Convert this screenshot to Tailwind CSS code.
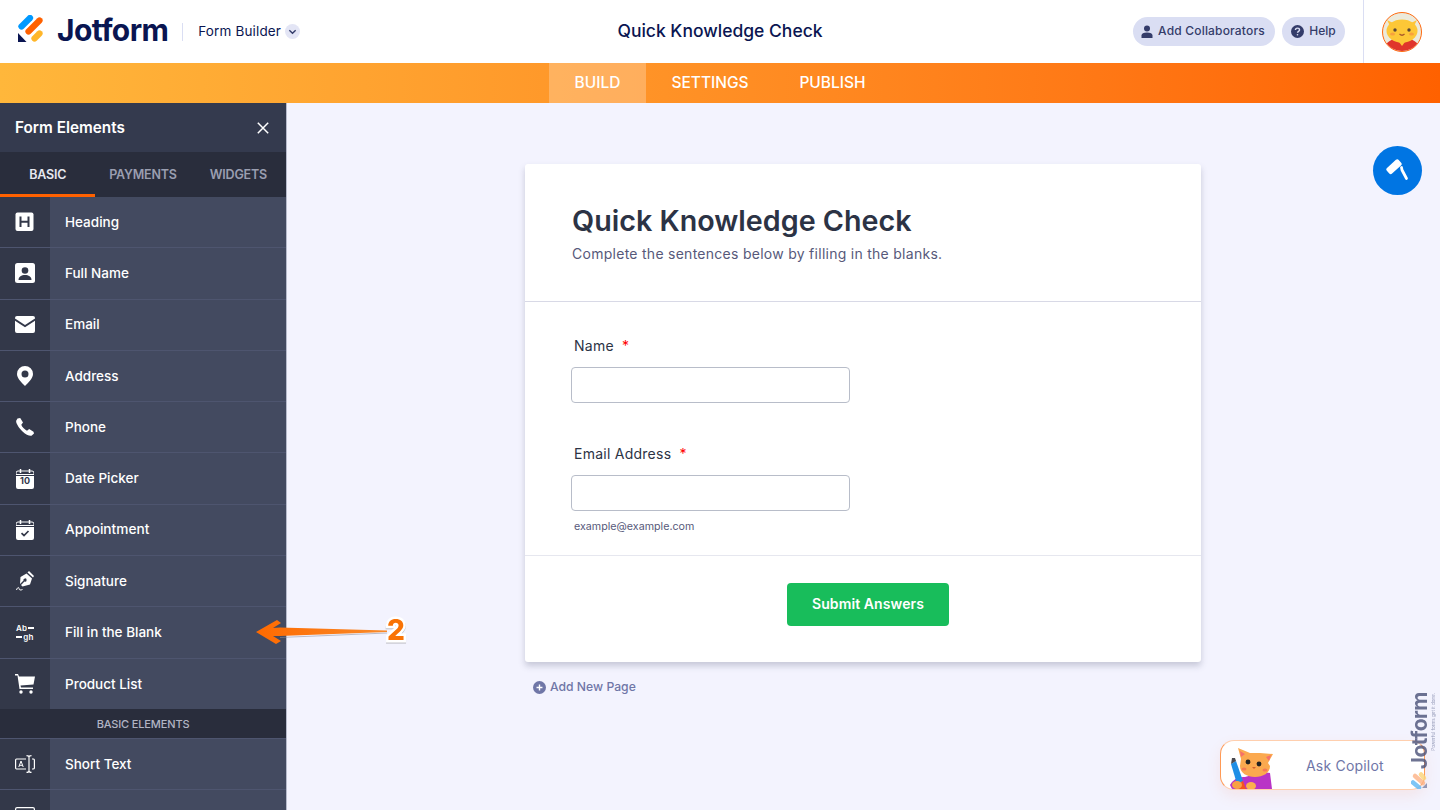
<!DOCTYPE html>
<html lang="en">
<head>
<meta charset="utf-8">
<title>Quick Knowledge Check</title>
<script src="https://cdn.jsdelivr.net/npm/@tailwindcss/browser@4"></script>
</head>
<body class="m-0 overflow-hidden font-['Inter',sans-serif]">
<div class="relative w-[1440px] h-[810px] overflow-hidden bg-[#f3f3fe] flex flex-col">

  <!-- header -->
  <header class="h-[63px] shrink-0 bg-white grid grid-cols-[1fr_auto_1fr] items-center">
    <div class="flex items-center pl-[18px]">
      <svg class="w-[26px] h-[28px] mb-[5px]" viewBox="0 0 26 28">
        <line x1="3.500" y1="11.500" x2="12" y2="3" stroke="#0099ff" stroke-width="6.200" stroke-linecap="round"/>
        <line x1="10.500" y1="16.500" x2="21.500" y2="5.500" stroke="#ff6100" stroke-width="6.200" stroke-linecap="round"/>
        <line x1="16.500" y1="23.500" x2="21.500" y2="18.500" stroke="#ffb629" stroke-width="6.200" stroke-linecap="round"/>
        <path d="M0 18 0 27H8.500Z" fill="#0a1551"/>
      </svg>
      <span class="ml-[13px] mb-[3px] text-[30px] leading-none font-bold tracking-[-0.6px] text-[#0a1551]">Jotform</span>
      <span class="ml-[14px] w-px h-[18px] bg-[#dadef3]"></span>
      <span class="ml-[15px] text-[13.500px] text-[#0a1551] tracking-[0.15px]">Form Builder</span>
      <span class="ml-[4px] w-[15px] h-[15px] rounded-full bg-[#e3e5f5] flex items-center justify-center">
        <svg class="w-[9px] h-[9px]" viewBox="0 0 10 10" fill="none" stroke="#343c6a" stroke-width="1.500"><path d="M1.500 3.500 5 7 8.500 3.500"/></svg>
      </span>
    </div>
    <h1 class="text-[17.500px] font-medium text-[#0a1551] mb-[1px]">Quick Knowledge Check</h1>
    <div class="flex items-center justify-end h-full">
      <button class="h-[29px] w-[142px] rounded-full bg-[#dadef3] flex items-center justify-center gap-[5px] pb-[1px] pr-[2px] text-[12px] font-medium tracking-[0.18px] text-[#343c6a]">
        <svg class="w-[12px] h-[13px]" viewBox="0 0 12 13" fill="#343c6a"><circle cx="6" cy="3.500" r="3"/><path d="M0.500 13V10.500C.5 8.500 2.500 7.500 6 7.500S11.500 8.500 11.500 10.500V13Z"/></svg>
        Add Collaborators
      </button>
      <button class="ml-[7px] h-[29px] w-[63px] rounded-full bg-[#dadef3] flex items-center justify-center gap-[5px] pb-[1px] text-[12px] font-medium text-[#343c6a]">
        <svg class="w-[13px] h-[13px]" viewBox="0 0 14 14"><circle cx="7" cy="7" r="7" fill="#343c6a"/><path d="M4.800 5.400C4.800 4.100 5.800 3.400 7 3.400S9.200 4.100 9.200 5.300C9.200 6.800 7 6.800 7 8.400" fill="none" stroke="#dadef3" stroke-width="1.500"/><circle cx="7" cy="10.500" r=".9" fill="#dadef3"/></svg>
        Help
      </button>
      <span class="ml-[18px] w-px h-full bg-[#dadef3]"></span>
      <span class="ml-[18px] mr-[18px] w-[40px] h-[40px] rounded-full border-[1.500px] border-[#ff6a10] bg-[#eceadb] overflow-hidden block">
        <svg class="w-full h-full block" viewBox="0 0 38 38">
          <path d="M1 38C1 29 9 25 19 25S37 29 37 38Z" fill="#e0352b"/>
          <path d="M4 7 8 15H30L34 7 26 11H12Z" fill="#ffc43d"/>
          <ellipse cx="19" cy="18" rx="15.500" ry="11.500" fill="#fdc737"/>
          <circle cx="12" cy="17" r="1.700" fill="#5b4636"/><circle cx="26" cy="17" r="1.700" fill="#5b4636"/>
          <ellipse cx="9.500" cy="21" rx="2.500" ry="1.500" fill="#f8a13d"/><ellipse cx="28.500" cy="21" rx="2.500" ry="1.500" fill="#f8a13d"/>
          <path d="M16.500 21Q19 23.500 21.500 21" fill="none" stroke="#a8562a" stroke-width="1.200"/>
          <path d="M16 29H22L19 33Z" fill="#fdc737"/>
        </svg>
      </span>
    </div>
  </header>

  <!-- nav -->
  <nav class="h-[40px] shrink-0 bg-gradient-to-r from-[#ffb73b] to-[#ff6100] flex pl-[549px] text-[15.500px] font-medium text-white">
    <a class="w-[97px] flex items-center justify-center bg-white/25">BUILD</a>
    <a class="w-[128px] flex items-center justify-center">SETTINGS</a>
    <a class="w-[117px] flex items-center justify-center">PUBLISH</a>
  </nav>

  <div class="flex-1 flex min-h-0">
    <!-- sidebar -->
    <aside class="w-[287px] shrink-0 border-r border-[#b7bbcc] bg-[#434a60] overflow-hidden text-white">
      <div class="h-[49px] bg-[#343a4e] flex items-center justify-between pl-[15px] pr-[17px]">
        <span class="pt-[2px] text-[15.300px] font-semibold">Form Elements</span>
        <svg class="w-[12px] h-[12px]" viewBox="0 0 12 12" stroke="#fff" stroke-width="1.500" fill="none"><path d="M.8.8 11.200 11.200M11.200.8.8 11.200"/></svg>
      </div>
      <div class="h-[45px] bg-[#292d3c] grid grid-cols-3 text-[12.500px] font-semibold tracking-[-0.2px]">
        <div class="flex items-center justify-center text-[#e6e8f0] border-b-[3px] border-[#ff6100] pt-[5px]">BASIC</div>
        <div class="flex items-center justify-center text-[#9a9eb0] pt-[2px]">PAYMENTS</div>
        <div class="flex items-center justify-center text-[#9a9eb0] pt-[2px]">WIDGETS</div>
      </div>

      <div class="h-[51.300px] flex border-b border-[#4e556f]">
        <div class="w-[50px] bg-[#333849] flex items-center justify-center">
          <svg class="w-[20px] h-[20px]" viewBox="0 0 20 20"><rect x=".5" y=".5" width="18" height="18.500" rx="2" fill="#fff"/><path d="M5.500 4.500V15M13.500 4.500V15M5.500 9.700H13.500" stroke="#333849" stroke-width="2" fill="none"/></svg>
        </div>
        <div class="flex-1 flex items-center pb-[0.7px] pl-[15px] text-[13.500px] font-medium">Heading</div>
      </div>
      <div class="h-[51.300px] flex border-b border-[#4e556f]">
        <div class="w-[50px] bg-[#333849] flex items-center justify-center">
          <svg class="w-[20px] h-[20px]" viewBox="0 0 20 20"><rect width="20" height="20" rx="2.500" fill="#fff"/><circle cx="10" cy="7.500" r="3.300" fill="#333849"/><path d="M3.500 17C3.500 13.500 6.500 12 10 12S16.500 13.500 16.500 17Z" fill="#333849"/></svg>
        </div>
        <div class="flex-1 flex items-center pb-[0.7px] pl-[15px] text-[13.500px] font-medium">Full Name</div>
      </div>
      <div class="h-[51.300px] flex border-b border-[#4e556f]">
        <div class="w-[50px] bg-[#333849] flex items-center justify-center">
          <svg class="w-[20px] h-[17px]" viewBox="0 0 20 17"><path d="M2 0H18A2 2 0 0 1 20 2V2.500L10 9 0 2.500V2A2 2 0 0 1 2 0Z" fill="#fff"/><path d="M0 4.800 10 11.200 20 4.800V15A2 2 0 0 1 18 17H2A2 2 0 0 1 0 15Z" fill="#fff"/></svg>
        </div>
        <div class="flex-1 flex items-center pb-[0.7px] pl-[15px] text-[13.500px] font-medium">Email</div>
      </div>
      <div class="h-[51.300px] flex border-b border-[#4e556f]">
        <div class="w-[50px] bg-[#333849] flex items-center justify-center">
          <svg class="w-[16px] h-[20px]" viewBox="0 0 16 20"><path fill-rule="evenodd" d="M8 0A8 8 0 0 1 16 8C16 12.500 11 17 8 20 5 17 0 12.500 0 8A8 8 0 0 1 8 0ZM8 4.500A3.500 3.500 0 1 0 8 11.500 3.500 3.500 0 1 0 8 4.500Z" fill="#fff"/></svg>
        </div>
        <div class="flex-1 flex items-center pb-[0.7px] pl-[15px] text-[13.500px] font-medium">Address</div>
      </div>
      <div class="h-[51.300px] flex border-b border-[#4e556f]">
        <div class="w-[50px] bg-[#333849] flex items-center justify-center">
          <svg class="w-[18px] h-[18px]" viewBox="0 0 18 18"><path d="M1.500 .5 4.200 0 7 4.500 5.300 6.800C6 9 8.500 11.500 11 12.700L13.200 11 17.500 13.800 18 15.500 15.500 17.700C14 18.300 10 17 6 13 2 9 -.5 4.500 .3 2.500Z" fill="#fff"/></svg>
        </div>
        <div class="flex-1 flex items-center pb-[0.7px] pl-[15px] text-[13.500px] font-medium">Phone</div>
      </div>
      <div class="h-[51.300px] flex border-b border-[#4e556f]">
        <div class="w-[50px] bg-[#333849] flex items-center justify-center relative">
          <svg class="w-[18px] h-[20px]" viewBox="0 0 18 20"><path d="M4.500 0V4M13.500 0V4" stroke="#fff" stroke-width="1.500"/><path d="M2 2H16A2 2 0 0 1 18 4V5.500H0V4A2 2 0 0 1 2 2Z" fill="none" stroke="#fff" stroke-width="1"/><path d="M0 7H18V18A2 2 0 0 1 16 20H2A2 2 0 0 1 0 18Z" fill="#fff"/></svg>
          <span class="absolute left-0 right-0 top-[23px] text-center text-[9px] leading-none font-bold text-[#333849]">10</span>
        </div>
        <div class="flex-1 flex items-center pb-[0.7px] pl-[15px] text-[13.500px] font-medium">Date Picker</div>
      </div>
      <div class="h-[51.300px] flex border-b border-[#4e556f]">
        <div class="w-[50px] bg-[#333849] flex items-center justify-center">
          <svg class="w-[18px] h-[20px]" viewBox="0 0 18 20"><path d="M4.500 0V4M13.500 0V4" stroke="#fff" stroke-width="1.500"/><path d="M2 2H16A2 2 0 0 1 18 4V5.500H0V4A2 2 0 0 1 2 2Z" fill="none" stroke="#fff" stroke-width="1"/><path d="M0 7H18V18A2 2 0 0 1 16 20H2A2 2 0 0 1 0 18Z" fill="#fff"/><path d="M5.500 13.200 8 15.500 12.500 11" fill="none" stroke="#333849" stroke-width="1.700"/></svg>
        </div>
        <div class="flex-1 flex items-center pb-[0.7px] pl-[15px] text-[13.700px] font-medium">Appointment</div>
      </div>
      <div class="h-[51.300px] flex border-b border-[#4e556f]">
        <div class="w-[50px] bg-[#333849] flex items-center justify-center">
          <svg class="w-[19px] h-[20px]" viewBox="0 0 19 20"><path d="M13 0 18 5 17 6.500 11.500 1.500Z" fill="#fff"/><path fill-rule="evenodd" d="M10.500 2.500 16 7.500 14 13.500 6.500 15.500 5 14 8.500 10.500A1.600 1.600 0 1 0 7.500 9.500L4 13 4.500 6Z" fill="#fff"/><path d="M.5 19C1.500 16 3 16 3 17.500S4.500 19.500 6.500 18.500" fill="none" stroke="#fff" stroke-width="1"/></svg>
        </div>
        <div class="flex-1 flex items-center pb-[0.7px] pl-[15px] text-[13.500px] font-medium">Signature</div>
      </div>
      <div class="h-[51.300px] flex border-b border-[#4e556f]">
        <div class="w-[50px] bg-[#333849] flex flex-col items-center justify-center text-[8px] leading-[9px] font-semibold">
          <div class="flex items-center gap-[1px] tracking-[.2px]">Ab<span class="w-[6px] h-[1.500px] bg-white"></span></div>
          <div class="flex items-center gap-[1px] tracking-[.2px]"><span class="w-[6px] h-[1.500px] bg-white"></span>gh</div>
        </div>
        <div class="flex-1 flex items-center pb-[0.7px] pl-[15px] text-[13.500px] font-medium">Fill in the Blank</div>
      </div>
      <div class="h-[50.300px] flex">
        <div class="w-[50px] bg-[#333849] flex items-center justify-center">
          <svg class="w-[20px] h-[20px]" viewBox="0 0 20 20"><path d="M0 0H3L4 2.500H20L18.500 10.500 5.500 11.500 6 13.500H18V15H4.500L2.500 1.500H0Z" fill="#fff"/><circle cx="6" cy="18" r="1.700" fill="#fff"/><circle cx="16" cy="18" r="1.700" fill="#fff"/></svg>
        </div>
        <div class="flex-1 flex items-center pl-[15px] text-[13.500px] font-medium">Product List</div>
      </div>

      <div class="h-[30px] pt-[1px] bg-[#292d3c] border-b border-[#4e556f] flex items-center justify-center text-[11px] font-medium text-[#b2b5c4] tracking-[-0.15px]">BASIC ELEMENTS</div>

      <div class="h-[51.200px] flex border-b border-[#4e556f]">
        <div class="w-[50px] bg-[#333849] flex items-center justify-center">
          <svg class="w-[20px] h-[18px]" viewBox="0 0 20 18" fill="none" stroke="#fff" stroke-width="1.200"><path d="M11 4H1.500A1 1 0 0 0 .6 5V13A1 1 0 0 0 1.500 14H11M17 4H18A1.300 1.300 0 0 1 19.400 5V13A1.300 1.300 0 0 1 18 14H17M11.500 .6C13 .6 14 1 14 2V16C14 17 13 17.400 11.500 17.400M16.500 .6C15 .6 14 1 14 2M14 16C14 17 15 17.400 16.500 17.400"/><path d="M3.800 12 6 6 8.200 12M4.500 10.300H7.500" stroke-width="1"/></svg>
        </div>
        <div class="flex-1 flex items-center pl-[15px] text-[13.500px] font-medium">Short Text</div>
      </div>
      <div class="h-[51.200px] flex">
        <div class="w-[50px] bg-[#333849] flex items-center justify-center">
          <svg class="w-[20px] h-[18px]" viewBox="0 0 20 18" fill="none" stroke="#fff" stroke-width="1.200"><rect x=".6" y=".6" width="18.800" height="16.800" rx="1.500"/><path d="M4 5H12"/></svg>
        </div>
        <div class="flex-1"></div>
      </div>
    </aside>

    <!-- main -->
    <main class="flex-1 min-w-0 pl-[238px] pt-[61px]">
      <section class="w-[676px] h-[498px] bg-white rounded-[3px] shadow-[0_4px_6px_rgba(87,90,120,0.28)] flex flex-col">
        <div class="h-[138px] shrink-0 border-b border-[#d8d9e6] pl-[47px] pt-[40px]">
          <h2 class="text-[28.700px] leading-[34px] font-semibold text-[#2c3345]">Quick Knowledge Check</h2>
          <p class="mt-[7px] text-[14px] leading-[18px] tracking-[0.27px] text-[#57597a]">Complete the sentences below by filling in the blanks.</p>
        </div>
        <div class="h-[254px] shrink-0 border-b border-[#e6e7ef] pl-[46px] pt-[35px]">
          <label class="pl-[3px] block h-[18px] text-[14px] leading-[18px] tracking-[0.25px] text-[#2c3345]">Name <span class="ml-[4px] text-[#f00]">*</span></label>
          <div class="mt-[12px] w-[279px] h-[36px] rounded-[4px] border border-[#b8bdc9] bg-white"></div>
          <label class="mt-[42px] pl-[3px] block h-[18px] text-[14px] leading-[18px] tracking-[0.25px] text-[#2c3345]">Email Address <span class="ml-[4px] text-[#f00]">*</span></label>
          <div class="mt-[12px] w-[279px] h-[36px] rounded-[4px] border border-[#b8bdc9] bg-white"></div>
          <p class="mt-[9px] pl-[3px] text-[10.700px] leading-[14px] text-[#57597a]">example@example.com</p>
        </div>
        <div class="flex-1 pl-[262px] pt-[27px]">
          <button class="w-[162px] h-[43px] pb-[2px] rounded-[4px] bg-[#18bd5b] text-white text-[14px] font-semibold tracking-[0.1px]">Submit Answers</button>
        </div>
      </section>
      <div class="mt-[16px] ml-[8px] flex items-center gap-[4px] text-[12.200px] font-medium text-[#6f76a7]">
        <svg class="w-[13px] h-[13px]" viewBox="0 0 14 14"><circle cx="7" cy="7" r="7" fill="#6f76a7"/><path d="M7 3.800V10.200M3.800 7H10.200" stroke="#fff" stroke-width="1.500"/></svg>
        Add New Page
      </div>
    </main>
  </div>

  <!-- floating paint button -->
  <button class="absolute left-[1373px] top-[146px] w-[49px] h-[49px] rounded-full bg-[#0075e3] flex items-center justify-center">
    <svg class="w-[24px] h-[24px]" viewBox="0 0 24 24"><rect x="0" y="3.900" width="16" height="7.600" rx="2" transform="rotate(-42 8 7.700)" fill="#fff"/><path d="M15.500 8.500 16 11 20.500 19.500" fill="none" stroke="#fff" stroke-width="2.800" stroke-linecap="round" stroke-linejoin="round"/></svg>
  </button>

  <!-- annotation arrow -->
  <svg class="absolute left-[250px] top-[615px] w-[140px] h-[36px]" viewBox="0 0 140 36">
    <defs><linearGradient id="a" x1="0" x2="1" y1="0" y2="0"><stop offset="0" stop-color="#ff6a00"/><stop offset="1" stop-color="#f98a2a"/></linearGradient></defs>
    <path d="M30 22.500 137 18" stroke="#8d8f9d" stroke-width="1.200" opacity=".55"/>
    <path d="M6 17 27 5 31 8 23 13 30 12.500 137 15.500 137 17 30 21 23 21 31 26 26 29Z" fill="url(#a)"/>
  </svg>
  <span class="absolute left-[387px] top-[612px] text-[28px] leading-[36px] font-extrabold text-[#f97306] [-webkit-text-stroke:5px_#ffffff] [paint-order:stroke_fill] drop-shadow-[0_1px_0.5px_rgba(90,90,90,0.35)]">2</span>

  <!-- copilot -->
  <div class="absolute left-[1220px] top-[740px] w-[205px] h-[50px] rounded-[14px] bg-white border border-[#ffcfae] border-l-[#ff9a55] border-r-[#ff9a55] shadow-[0_6px_14px_rgba(255,130,80,0.12)] flex items-center overflow-hidden">
    <svg class="absolute left-[8px] top-[6px] w-[46px] h-[42px]" viewBox="0 0 46 42">
      <path d="M1 38Q6 29 16 30L34 25 41 26 43 42H3Z" fill="#b934c6"/>
      <path d="M12 12 9 1 21 6H31L44 7 39 16 41 19C41 26 34 30 26 30S11 26 11 19Z" fill="#fba94f"/>
      <path d="M11 4 16 7 12 10ZM42 8 37 10 40 14Z" fill="#f6706a"/>
      <circle cx="19" cy="15" r="2.400" fill="#222"/><circle cx="30" cy="17" r="2.400" fill="#222"/>
      <ellipse cx="15" cy="22" rx="2.500" ry="1.500" fill="#f67a55"/><ellipse cx="36" cy="23" rx="2.500" ry="1.500" fill="#f67a55"/>
      <path d="M23 20H27L25 22Z" fill="#d4602e"/>
      <path d="M2 17 7 14 14 34 8 37Z" fill="#1f8fe6"/>
      <path d="M2 17 3 11 6 11 7 14Z" fill="#4a4a50"/>
      <path d="M8 37 14 34 17 42H10Z" fill="#f5541f"/>
      <ellipse cx="8" cy="38" rx="5" ry="4" fill="#f9a044"/>
      <ellipse cx="22" cy="39" rx="5" ry="4" fill="#fbb04e"/>
    </svg>
    <span class="pl-[85px] text-[14px] tracking-[0.2px] text-[#6f76a7]">Ask Copilot</span>
  </div>

  <!-- vertical watermark -->
  <div class="absolute left-[1410px] top-[692px] w-[26px] h-[100px] pointer-events-none opacity-80 blur-[0.4px]">
    <div class="absolute left-[-37px] top-[35px] w-[100px] h-[30px] -rotate-90 flex flex-col items-end justify-center text-[#4a5178]">
      <span class="text-[21px] leading-[22px] font-bold tracking-[-0.5px]">Jotform</span>
      <span class="text-[4.500px] leading-[6px] text-[#7c83a6] pr-[1px]">Powerful forms get it done.</span>
    </div>
    <svg class="absolute left-[1px] top-[79px] w-[18px] h-[18px]" viewBox="0 0 18 18" fill="none" stroke-width="4.500" stroke-linecap="round">
      <path d="M2 11.500 8 16.500" stroke="#5cb7f5"/><path d="M4 5 12 12" stroke="#fdb285"/><path d="M10 3.500 13 7" stroke="#fcd478"/>
      <path d="M11 17 16 12V17Z" fill="#7c83a6" stroke="none"/>
    </svg>
  </div>
</div>
</body>
</html>
